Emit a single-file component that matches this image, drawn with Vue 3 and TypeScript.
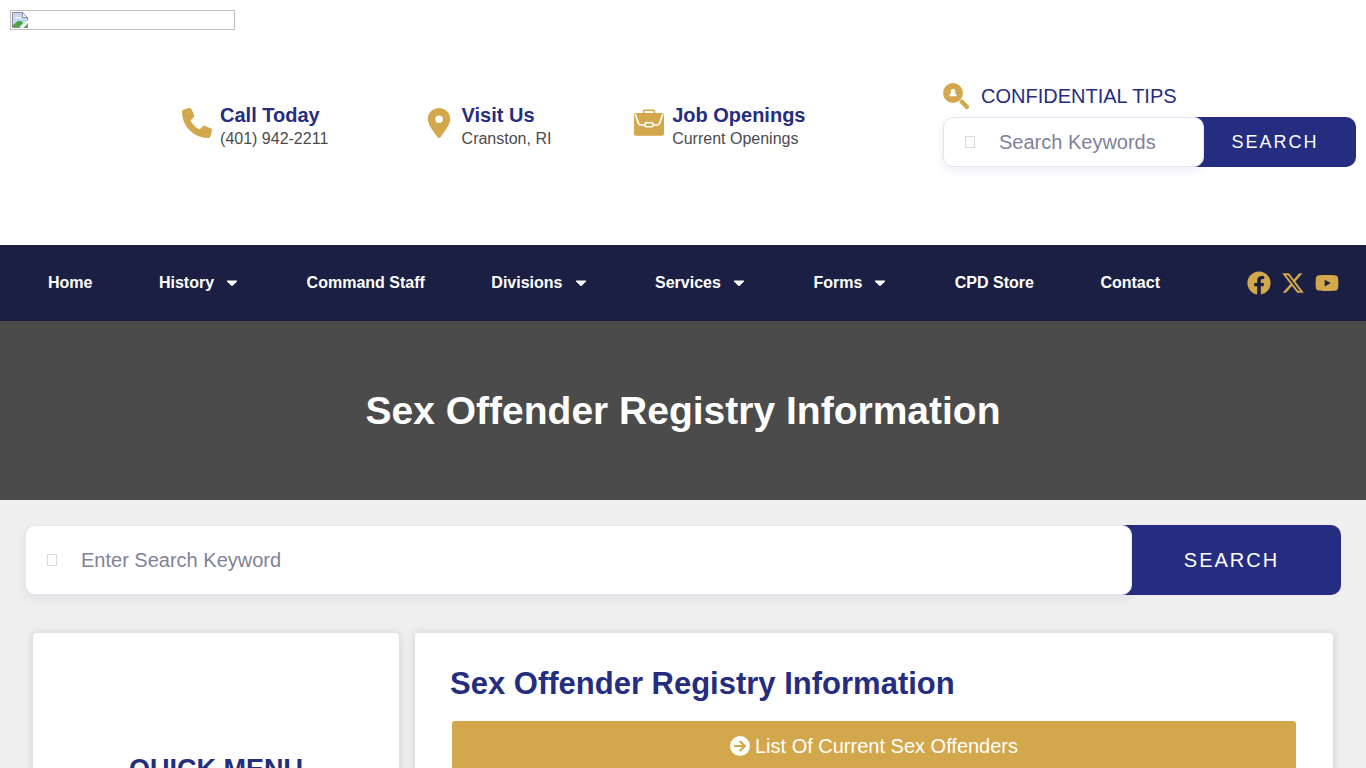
<script setup lang="ts">
interface NavItem {
  label: string
  menu?: boolean
}

interface Contact {
  icon: 'phone' | 'pin' | 'briefcase'
  title: string
  text: string
}

const contacts: Contact[] = [
  { icon: 'phone', title: 'Call Today', text: '(401) 942-2211' },
  { icon: 'pin', title: 'Visit Us', text: 'Cranston, RI' },
  { icon: 'briefcase', title: 'Job Openings', text: 'Current Openings' },
]

const navItems: NavItem[] = [
  { label: 'Home' },
  { label: 'History', menu: true },
  { label: 'Command Staff' },
  { label: 'Divisions', menu: true },
  { label: 'Services', menu: true },
  { label: 'Forms', menu: true },
  { label: 'CPD Store' },
  { label: 'Contact' },
]
</script>

<template>
  <div class="page">
    <header class="header">
      <a class="logo" href="#" aria-label="Home page">
        <svg width="16" height="16" viewBox="0 0 16 16" aria-hidden="true">
          <path d="M.5.5h10l5 5v10H.5z" fill="#c3d6f5" stroke="#8d8d8d" />
          <path d="M10.500.5v5h5z" fill="#fff" stroke="#8d8d8d" />
          <path d="M3 6.500a2 2 0 0 1 3-1.500 2 2 0 0 1 3 1.500z" fill="#fff" />
          <path d="M1 15v-2l5-4h3l2 2-4 4z" fill="#4ca63c" />
          <path d="M8 16l8-8v3l-5 5z" fill="#fff" />
          <path d="M12 15.500l3.500-3.500v3.500z" fill="#4ca63c" />
        </svg>
      </a>

      <div class="contacts">
        <a v-for="c in contacts" :key="c.title" class="contact" href="#">
          <svg class="contact-icon" viewBox="0 0 512 512" aria-hidden="true">
            <path
              v-if="c.icon === 'phone'"
              d="M164.900 24.600c-7.700-18.600-28-28.500-47.400-23.200l-88 24C12.100 30.200 0 46 0 64c0 247.400 200.600 448 448 448 18 0 33.800-12.100 38.600-29.500l24-88c5.300-19.400-4.600-39.700-23.200-47.400l-96-40c-16.300-6.800-35.200-2.100-46.300 11.600L304.700 368C234.300 334.700 177.300 277.700 144 207.300L193.300 167c13.700-11.200 18.400-30 11.600-46.300l-40-96z"
            />
            <path
              v-else-if="c.icon === 'pin'"
              transform="translate(64 0)"
              d="M215.700 499.200C267 435 384 279.400 384 192 384 86 298 0 192 0S0 86 0 192c0 87.400 117 243 168.300 307.200 12.300 15.300 35.100 15.300 47.400 0zM192 128a64 64 0 1 1 0 128 64 64 0 1 1 0-128z"
            />
            <g v-else>
              <path d="M164 92V60q0-22 22-22h140q22 0 22 22v32" fill="none" stroke="#d3a74b" stroke-width="28" />
              <path d="M34 84h444q34 0 34 34v320q0 34-34 34H34q-34 0-34-34V118q0-34 34-34z" />
              <path
                d="M20 104l56 158q12 28 42 28h62M492 104l-56 158q-12 28-42 28h-62"
                fill="none"
                stroke="#fff"
                stroke-width="28"
              />
              <rect x="186" y="252" width="140" height="68" rx="26" fill="none" stroke="#fff" stroke-width="26" />
              <path d="M136 84V72M376 84V72" stroke="#fff" stroke-width="14" />
            </g>
          </svg>
          <span class="contact-body">
            <strong>{{ c.title }}</strong>
            <span>{{ c.text }}</span>
          </span>
        </a>
      </div>

      <div class="header-tools">
        <a class="tips" href="#">
          <svg width="26" height="26" viewBox="0 0 26 26" aria-hidden="true">
            <circle cx="10" cy="10" r="10" fill="#d3a74b" />
            <path d="M18.800 18.800l5 5" stroke="#d3a74b" stroke-width="4.400" stroke-linecap="round" />
            <circle cx="10" cy="8.400" r="2.400" fill="#fff" />
            <path d="M6.400 13.200q0-3.800 3.600-3.800t3.600 3.800z" fill="#fff" />
          </svg>
          <span>CONFIDENTIAL TIPS</span>
        </a>
        <form class="search small" @submit.prevent>
          <div class="field">
            <span class="glyph" aria-hidden="true"></span>
            <input type="search" aria-label="Search Keywords" placeholder="Search Keywords" />
          </div>
          <button type="submit">SEARCH</button>
        </form>
      </div>
    </header>

    <div class="bar">
      <nav class="menu" aria-label="Main">
        <a v-for="item in navItems" :key="item.label" href="#">
          {{ item.label }}
          <svg v-if="item.menu" class="caret" width="16" height="16" viewBox="0 0 16 16" aria-hidden="true">
            <path d="M3.400 5.500h9.200q1 .2.300 1.100l-4.200 4.200q-.7.600-1.400 0L3.100 6.600q-.7-.9.300-1.100z" fill="#fff" />
          </svg>
        </a>
      </nav>
      <div class="social">
        <a href="#" aria-label="Facebook">
          <svg viewBox="0 0 512 512">
            <path
              d="M504 256C504 119 393 8 256 8S8 119 8 256c0 123.780 90.690 226.380 209.250 245V327.690h-63V256h63v-54.640c0-62.150 37-96.480 93.670-96.480 27.140 0 55.520 4.840 55.520 4.840v61h-31.280c-30.800 0-40.410 19.120-40.410 38.730V256h68.780l-11 71.690h-57.780V501C413.310 482.380 504 379.780 504 256z"
            />
          </svg>
        </a>
        <a href="#" aria-label="X">
          <svg viewBox="0 0 512 512">
            <path
              d="M389.200 48h70.600L305.600 224.200 487 464H345L233.700 318.600 106.500 464H35.800L200.700 275.500 26.800 48H172.400L272.900 180.900 389.200 48zM364.400 421.800h39.100L151.100 88h-42L364.400 421.800z"
            />
          </svg>
        </a>
        <a href="#" aria-label="YouTube">
          <svg viewBox="0 0 576 512">
            <path
              d="M549.655 124.083c-6.281-23.650-24.787-42.276-48.284-48.597C458.781 64 288 64 288 64S117.220 64 74.629 75.486c-23.497 6.322-42.003 24.947-48.284 48.597-11.412 42.867-11.412 132.305-11.412 132.305s0 89.438 11.412 132.305c6.281 23.650 24.787 41.500 48.284 47.821C117.220 448 288 448 288 448s170.780 0 213.371-11.486c23.497-6.321 42.003-24.171 48.284-47.821 11.412-42.867 11.412-132.305 11.412-132.305s0-89.438-11.412-132.305zm-317.510 213.508V175.185l142.739 81.205-142.739 81.201z"
            />
          </svg>
        </a>
      </div>
    </div>

    <div class="hero">
      <h1>Sex Offender Registry Information</h1>
    </div>

    <main class="main">
      <form class="search large" @submit.prevent>
        <div class="field">
          <span class="glyph" aria-hidden="true"></span>
          <input type="search" aria-label="Enter Search Keyword" placeholder="Enter Search Keyword" />
        </div>
        <button type="submit">SEARCH</button>
      </form>

      <div class="columns">
        <aside class="card side">
          <h2>QUICK MENU</h2>
        </aside>
        <section class="card content">
          <h2>Sex Offender Registry Information</h2>
          <a class="cta" href="#">
            <svg width="20" height="20" viewBox="0 0 20 20" aria-hidden="true">
              <circle cx="10" cy="10" r="10" fill="#fff" />
              <path d="M4 10h10.500M9.800 5l5 5-5 5" fill="none" stroke="#d3a74b" stroke-width="2.200" />
            </svg>
            <span>List Of Current Sex Offenders</span>
          </a>
        </section>
      </div>
    </main>
  </div>
</template>

<style>
html {
  scrollbar-width: none;
}
body {
  margin: 0;
}
</style>

<style scoped>
.page,
.page * {
  box-sizing: border-box;
}
.page {
  font-family: "Liberation Sans", Arial, sans-serif;
  background: #efefef;
}
a {
  color: inherit;
  text-decoration: none;
}
h1,
h2 {
  margin: 0;
  font-weight: 700;
}

.header {
  display: grid;
  grid-template-columns: 129px 1fr 413px;
  align-items: center;
  min-height: 245px;
  padding: 10px;
  background: #fff;
}
.logo {
  display: flex;
  align-items: center;
  align-self: start;
  width: 225px;
  height: 20px;
  padding-left: 1px;
  border: 1px solid #c0c0c0;
}
.contacts {
  display: grid;
  grid-template-columns: repeat(3, 1fr);
  margin-right: 107px;
  padding-top: 8px;
}
.contact {
  display: flex;
  justify-content: center;
  gap: 8px;
}
.contact-icon {
  width: 30px;
  height: 30px;
  margin-top: 5px;
  fill: #d3a74b;
}
.contact-body {
  display: flex;
  flex-direction: column;
  font-size: 16px;
  line-height: 24px;
  color: #4b4b4b;
}
.contact-body strong {
  font-size: 20px;
  color: #252d80;
}
.header-tools {
  display: flex;
  flex-direction: column;
  gap: 8px;
  padding-top: 5px;
}
.tips {
  display: flex;
  align-items: center;
  gap: 12px;
  font-size: 20px;
  line-height: 26px;
  color: #252d80;
}

.search {
  display: flex;
}
.field {
  position: relative;
  z-index: 1;
  display: flex;
  flex: 1;
  align-items: center;
  min-width: 0;
  padding-left: 21px;
  gap: 24px;
  background: #fff;
  border: 1px solid #e3e5f4;
  border-radius: 10px;
  box-shadow: 0 4px 8px rgba(50, 50, 147, 0.08);
}
.glyph {
  flex: none;
  width: 10px;
  height: 12px;
  border: 1px solid #d9d9dd;
}
.field input {
  flex: 1;
  min-width: 0;
  padding: 0;
  border: 0;
  outline: 0;
  background: transparent;
  font: 20px/24px "Liberation Sans", Arial, sans-serif;
  color: #4b4b4b;
}
.field input::placeholder {
  color: #7f8299;
  opacity: 1;
}
.search button {
  margin-left: -10px;
  padding: 0;
  border: 0;
  border-radius: 0 10px 10px 0;
  background: #252d80;
  color: #fff;
  font-family: inherit;
  letter-spacing: 2px;
}
.small {
  height: 50px;
}
.small button {
  width: 162px;
  font-size: 18px;
}
.large {
  height: 70px;
}
.large .field {
  border-color: #e6e7f1;
}
.large button {
  width: 219px;
  font-size: 20px;
}

.bar {
  display: flex;
  align-items: center;
  justify-content: space-between;
  min-height: 76px;
  padding: 0 27px 0 48px;
  background: #1b1f43;
}
.menu {
  display: flex;
  flex: 1;
  justify-content: space-between;
  margin-right: 87px;
}
.menu a {
  display: flex;
  align-items: center;
  gap: 10px;
  font-size: 16px;
  font-weight: 700;
  line-height: 20px;
  color: #fff;
}
.social {
  display: flex;
  gap: 10px;
}
.social a {
  display: flex;
  width: 24px;
  height: 24px;
}
.social svg {
  width: 24px;
  height: 24px;
  fill: #d3a74b;
}

.hero {
  display: flex;
  align-items: center;
  justify-content: center;
  min-height: 179px;
  background: #4b4b4b;
  color: #fff;
}
.hero h1 {
  font-size: 39px;
  line-height: 40px;
}

.main {
  padding: 25px;
}
.columns {
  display: grid;
  grid-template-columns: 366fr 918fr;
  gap: 16px;
  margin: 38px 8px 0;
}
.card {
  background: #fff;
  border-radius: 4px;
  box-shadow: 0 0 10px rgba(0, 0, 0, 0.15);
  color: #252d80;
}
.side {
  padding: 120px 20px;
  text-align: center;
}
.side h2 {
  font-size: 27px;
  line-height: 32px;
}
.content {
  padding: 35px 37px;
}
.content h2 {
  margin-left: -2px;
  font-size: 31px;
  line-height: 32px;
}
.cta {
  display: flex;
  align-items: center;
  justify-content: center;
  gap: 5px;
  min-height: 50px;
  margin-top: 21px;
  border-radius: 3px;
  background: #d3a74b;
  color: #fff;
  font-size: 20px;
}
</style>
